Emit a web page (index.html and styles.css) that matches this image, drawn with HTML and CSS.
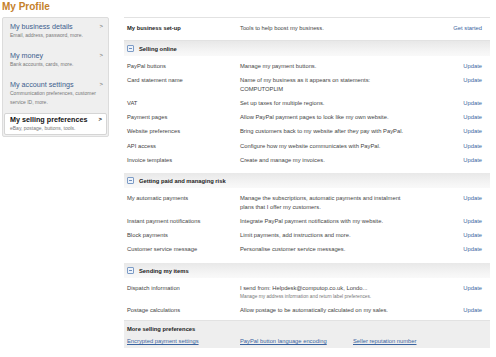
FILE: index.html
```html
<!DOCTYPE html>
<html>
<head>
	<meta charset="utf8">
	<title>My Profile</title>
	<link rel="stylesheet" href="styles.css">
</head>
<body>
	<div class="page">
		<h1>My Profile</h1>
		<div class="layout">
			<nav class="side">
				<a class="side-item">
					<span class="side-title">My business details</span>
					<span class="side-sub">Email, address, password, more.</span>
				</a>
				<a class="side-item">
					<span class="side-title">My money</span>
					<span class="side-sub">Bank accounts, cards, more.</span>
				</a>
				<a class="side-item">
					<span class="side-title">My account settings</span>
					<span class="side-sub">Communication preferences, customer service ID, more.</span>
				</a>
				<a class="side-item active">
					<span class="side-title">My selling preferences</span>
					<span class="side-sub">eBay, postage, buttons, tools.</span>
				</a>
			</nav>

			<main class="main">
				<div class="row setup">
					<div class="label bold">My business set-up</div>
					<div class="desc">Tools to help boost my business.</div>
					<a class="action">Get started</a>
				</div>

				<section class="group">
					<h2 class="group-head"><span class="toggle"></span>Selling online</h2>
					<div class="row">
						<div class="label">PayPal buttons</div>
						<div class="desc">Manage my payment buttons.</div>
						<a class="action">Update</a>
					</div>
					<div class="row">
						<div class="label">Card statement name</div>
						<div class="desc">Name of my business as it appears on statements:<br>COMPUTOPLIM</div>
						<a class="action">Update</a>
					</div>
					<div class="row">
						<div class="label">VAT</div>
						<div class="desc">Set up taxes for multiple regions.</div>
						<a class="action">Update</a>
					</div>
					<div class="row">
						<div class="label">Payment pages</div>
						<div class="desc">Allow PayPal payment pages to look like my own website.</div>
						<a class="action">Update</a>
					</div>
					<div class="row">
						<div class="label">Website preferences</div>
						<div class="desc">Bring customers back to my website after they pay with PayPal.</div>
						<a class="action">Update</a>
					</div>
					<div class="row">
						<div class="label">API access</div>
						<div class="desc">Configure how my website communicates with PayPal.</div>
						<a class="action">Update</a>
					</div>
					<div class="row">
						<div class="label">Invoice templates</div>
						<div class="desc">Create and manage my invoices.</div>
						<a class="action">Update</a>
					</div>
				</section>

				<section class="group">
					<h2 class="group-head"><span class="toggle"></span>Getting paid and managing risk</h2>
					<div class="row">
						<div class="label">My automatic payments</div>
						<div class="desc">Manage the subscriptions, automatic payments and instalment<br>plans that I offer my customers.</div>
						<a class="action">Update</a>
					</div>
					<div class="row">
						<div class="label">Instant payment notifications</div>
						<div class="desc">Integrate PayPal payment notifications with my website.</div>
						<a class="action">Update</a>
					</div>
					<div class="row">
						<div class="label">Block payments</div>
						<div class="desc">Limit payments, add instructions and more.</div>
						<a class="action">Update</a>
					</div>
					<div class="row">
						<div class="label">Customer service message</div>
						<div class="desc">Personalise customer service messages.</div>
						<a class="action">Update</a>
					</div>
				</section>

				<section class="group">
					<h2 class="group-head"><span class="toggle"></span>Sending my items</h2>
					<div class="row">
						<div class="label">Dispatch information</div>
						<div class="desc">I send from: Helpdesk@computop.co.uk, Londo...<span class="note">Manage my address information and return label preferences.</span></div>
						<a class="action">Update</a>
					</div>
					<div class="row">
						<div class="label">Postage calculations</div>
						<div class="desc">Allow postage to be automatically calculated on my sales.</div>
						<a class="action">Update</a>
					</div>
				</section>

				<div class="more">
					<div class="more-title">More selling preferences</div>
					<div class="more-links">
						<a>Encrypted payment settings</a>
						<a>PayPal button language encoding</a>
						<a>Seller reputation number</a>
					</div>
				</div>
			</main>
		</div>
	</div>
</body>
</html>
```

FILE: styles.css
```css
html, body {
	margin: 0;
	padding: 0;
	background: #fff;
	font-family: "Liberation Sans", Arial, sans-serif;
	color: #333;
}
a {
	cursor: pointer;
}

.page {
	padding: 0 6px 0 2px;
}
h1 {
	margin: 0;
	height: 17px;
	font-size: 10px;
	line-height: 13px;
	color: #c5802a;
}
.layout {
	display: flex;
	align-items: flex-start;
	gap: 15px;
}

/* left menu */
.side {
	flex: 0 0 105px;
	display: flex;
	flex-direction: column;
	gap: 11px;
	padding: 4px 0 1px 0;
	background: #efefef;
	border: 1px solid #dcdcdc;
	border-radius: 2px;
}
.side-item {
	display: flex;
	flex-direction: column;
	position: relative;
	padding: 0 6px;
	margin: 0 1px;
}
.side-item::after {
	content: ">";
	position: absolute;
	right: 4px;
	top: 1px;
	font-size: 6px;
	color: #666;
}
.side-title {
	font-size: 7.2px;
	line-height: 9px;
	color: #3d5e8e;
}
.side-sub {
	font-size: 5px;
	line-height: 9px;
	color: #777;
}
.side-item.active {
	background: #fff;
	border: 1px solid #d5d5d5;
	border-radius: 2px;
	padding: 1px 5px;
	margin-top: -5px;
}
.side-item.active .side-title {
	color: #111;
	font-weight: bold;
}
.side-item.active::after {
	top: 2px;
	color: #111;
	font-weight: bold;
}

/* right content */
.main {
	flex: 1 1 auto;
	border-top: 1px solid #e2e2e2;
	font-size: 5.8px;
}
.row {
	display: grid;
	grid-template-columns: 113px 1fr auto;
	align-items: start;
	padding: 2.6px 8px 2.6px 3px;
	line-height: 9px;
}
.row.setup {
	box-sizing: border-box;
	align-items: center;
	height: 23px;
	padding-top: 0;
	padding-bottom: 2px;
	border-bottom: 1px solid #e2e2e2;
}
.label {
	color: #444;
}
.bold {
	font-weight: bold;
	color: #222;
}
.desc {
	color: #444;
}
.note {
	display: block;
	font-size: 4.8px;
	line-height: 8px;
	color: #777;
}
.action {
	color: #3a64a0;
}

.group {
	padding-bottom: 6px;
}
.group:last-of-type {
	padding-bottom: 3px;
}
.group-head {
	display: flex;
	align-items: center;
	height: 15px;
	margin: 0 0 3px 0;
	padding-left: 3px;
	font-size: 5.8px;
	font-weight: bold;
	color: #222;
	background: linear-gradient(#e8e8e8, #f5f5f5 70%, #f9f9f9);
}
.toggle {
	position: relative;
	width: 5px;
	height: 5px;
	margin-right: 5px;
	border: 1px solid #7d9cc6;
	border-radius: 1px;
	background: #eef3fa;
}
.toggle::after {
	content: "";
	position: absolute;
	left: 1px;
	right: 1px;
	top: 2px;
	height: 1px;
	background: #6f8fbd;
}

.more {
	padding: 3.5px 3px 2px 3px;
	background: #eeeeee;
	border-top: 1px solid #e2e2e2;
	border-bottom: 3px solid #fff;
	box-shadow: 0 3px 0 -2px #e2e2e2;
}
.more-title {
	font-weight: bold;
	color: #222;
	line-height: 9px;
}
.more-links {
	display: grid;
	grid-template-columns: 113px 113px auto;
	margin-top: 3px;
	line-height: 9px;
}
.more-links a {
	color: #3a64a0;
	text-decoration: underline;
}
```
